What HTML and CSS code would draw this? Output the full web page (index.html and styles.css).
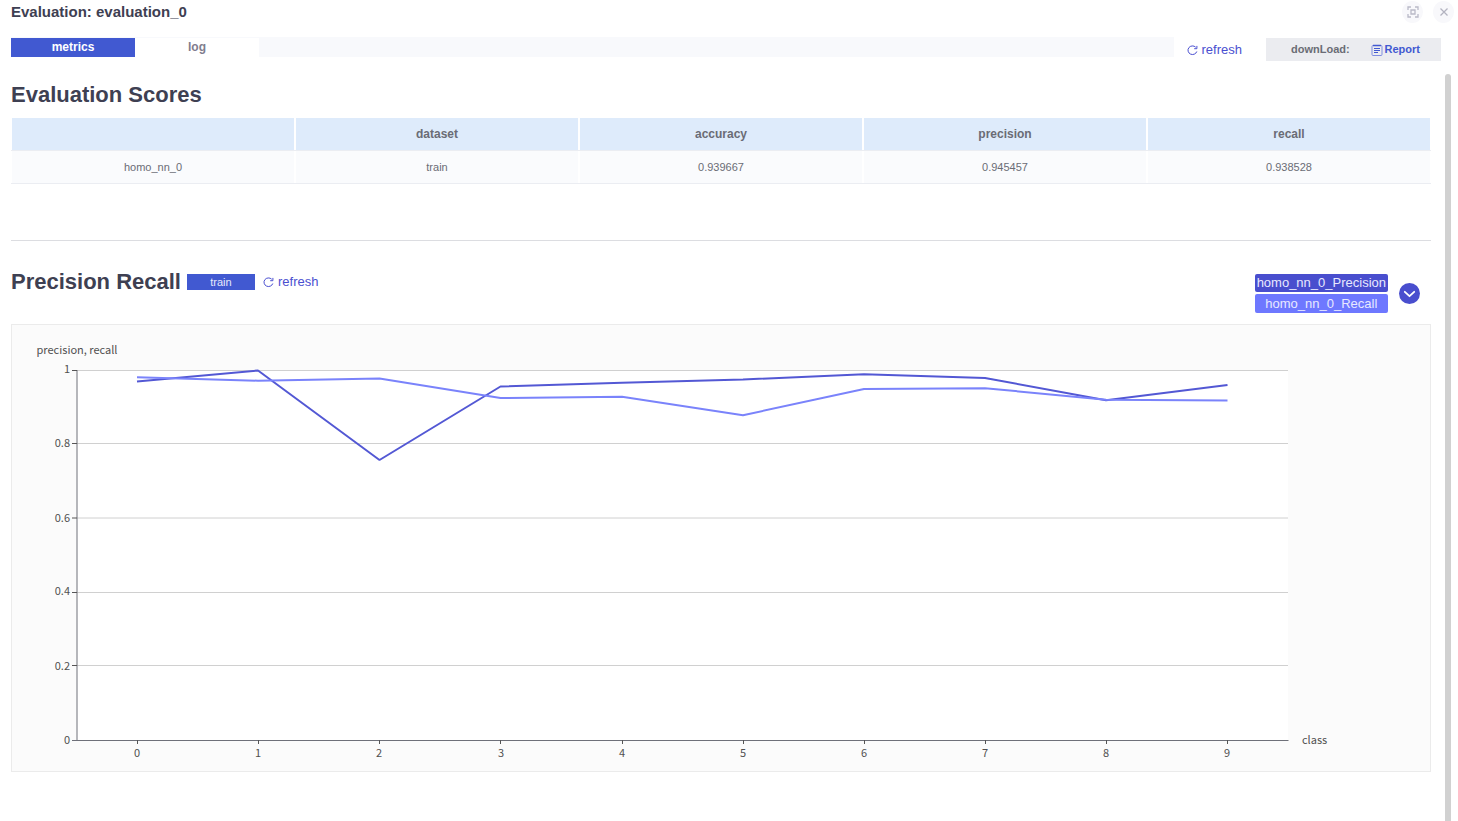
FILE: index.html
```html
<!DOCTYPE html>
<html lang="en">
<head>
<meta charset="utf-8">
<title>Evaluation: evaluation_0</title>
<link rel="stylesheet" href="styles.css">
</head>
<body>
<div class="dialog">
  <header class="dialog-header">
    <h1 class="dialog-title">Evaluation: evaluation_0</h1>
    <div class="window-actions">
      <button class="round-button" type="button" aria-label="Full screen">
        <svg width="12" height="12" viewBox="0 0 12 12" fill="none" stroke="#b9b9c7" stroke-width="1.3"><path d="M1 4V1h3M8 1h3v3M11 8v3H8M4 11H1V8M4 4h4v4H4z"/></svg>
      </button>
      <button class="round-button" type="button" aria-label="Close">
        <svg width="12" height="12" viewBox="0 0 12 12" fill="none" stroke="#b3b3c0" stroke-width="1.3"><path d="M2.500 2.500l7 7M9.500 2.500l-7 7"/></svg>
      </button>
    </div>
  </header>

  <div class="toolbar">
    <nav class="tabs" aria-label="Views">
      <button class="tab tab-active" type="button">metrics</button>
      <button class="tab" type="button">log</button>
    </nav>
    <button class="refresh" type="button">
      <svg width="11" height="11" viewBox="0 0 11 11" fill="none" stroke="#4a4fd0" stroke-width="1"><path d="M9.800 6.500A4.500 4.300 0 1 1 8.700 2.200M9.900.9v2.800H7.200"/></svg>
      refresh
    </button>
    <div class="download">
      <span>downLoad:</span>
      <a class="report" href="#">
        <svg width="12" height="12" viewBox="0 0 12 12" fill="none" stroke="#4159d1"><rect x="1" y="1.500" width="10" height="10" rx="1" stroke="#7f8de0" stroke-width="1"/><path d="M2 1.500h8" stroke-width="1.500"/><path d="M3 4.500h6M3 6.500h6M3 8.500h4" stroke-width="1"/></svg>
        Report
      </a>
    </div>
  </div>

  <div class="body">
    <main class="content">
      <section class="scores">
        <h2 class="section-title">Evaluation Scores</h2>
        <table class="score-table">
          <thead>
            <tr><th></th><th>dataset</th><th>accuracy</th><th>precision</th><th>recall</th></tr>
          </thead>
          <tbody>
            <tr><td>homo_nn_0</td><td>train</td><td>0.939667</td><td>0.945457</td><td>0.938528</td></tr>
          </tbody>
        </table>
      </section>

      <section class="curve">
        <div class="curve-header">
          <div class="curve-heading">
            <h2 class="section-title">Precision Recall</h2>
            <button class="dataset" type="button">train</button>
            <button class="refresh" type="button">
              <svg width="11" height="11" viewBox="0 0 11 11" fill="none" stroke="#4a4fd0" stroke-width="1"><path d="M9.800 6.500A4.500 4.300 0 1 1 8.700 2.200M9.900.9v2.800H7.200"/></svg>
              refresh
            </button>
          </div>
          <div class="legend">
            <div class="legend-items">
              <button class="legend-item legend-precision" type="button">homo_nn_0_Precision</button>
              <button class="legend-item legend-recall" type="button">homo_nn_0_Recall</button>
            </div>
            <button class="expand" type="button" aria-label="Expand legend">
              <svg width="13" height="13" viewBox="0 0 13 13" fill="none" stroke="#fff" stroke-width="1.800" stroke-linecap="round" stroke-linejoin="round"><path d="M1.800 4.800l4.700 4.400 4.700-4.400"/></svg>
            </button>
          </div>
        </div>

        <svg class="chart" viewBox="12 325 1418 446" role="img" aria-label="Precision and recall by class">
          <rect class="plot" x="77" y="370" width="1211" height="370"/>
          <path class="grid" d="M77 370.500H1288M77 443.500H1288M77 518H1288M77 592.500H1288M77 665.500H1288"/>
          <path class="axis" d="M77 370V740.500M72 740.500H1288.500"/>
          <path class="tick" d="M72 370.500h5M72 443.500h5M72 518h5M72 592.500h5M72 665.500h5M137.500 740v4M258.500 740v4M379.500 740v4M500.500 740v4M622.500 740v4M743.500 740v4M864.500 740v4M985.500 740v4M1106.500 740v4M1227.500 740v4"/>
          <g class="label label-y">
            <text x="70" y="373">1</text><text x="70" y="447">0.8</text><text x="70" y="522">0.6</text><text x="70" y="595">0.4</text><text x="70" y="670">0.2</text><text x="70" y="744">0</text>
          </g>
          <g class="label label-x">
            <text x="137" y="757">0</text><text x="258" y="757">1</text><text x="379" y="757">2</text><text x="501" y="757">3</text><text x="622" y="757">4</text><text x="743" y="757">5</text><text x="864" y="757">6</text><text x="985" y="757">7</text><text x="1106" y="757">8</text><text x="1227" y="757">9</text>
            <text x="77" y="354">precision, recall</text>
          </g>
          <text class="label" x="1302" y="744">class</text>
          <polyline class="line line-precision" points="137,381.500 258,370.500 379.500,460 500.500,386.500 622,382.700 743,379.500 864,374.200 985,378 1106,400.300 1227.500,385"/>
          <polyline class="line line-recall" points="137,377.300 258,380.700 379.500,378.500 500.500,398 622,396.700 743,415.200 864,389 985,388.200 1106,399.800 1227.500,400.500"/>
        </svg>
      </section>
    </main>
    <div class="scroll-track"><div class="scroll-thumb"></div></div>
  </div>
</div>
</body>
</html>
```
FILE: styles.css
```css
* {
  box-sizing: border-box;
}

body {
  margin: 0;
  background: #fff;
  color: #3e4052;
  font-family: "Liberation Sans", Arial, sans-serif;
}

button {
  margin: 0;
  padding: 0;
  border: 0;
  background: none;
  font-family: inherit;
  cursor: pointer;
}

.dialog {
  display: flex;
  flex-direction: column;
  min-height: 100vh;
}

.dialog-header {
  display: flex;
  align-items: center;
  justify-content: space-between;
  padding: 0 4px 0 11px;
}

.dialog-title {
  margin: 0;
  font-size: 15px;
  line-height: 24px;
}

.window-actions {
  display: flex;
  gap: 10px;
}

.round-button {
  display: flex;
  align-items: center;
  justify-content: center;
  width: 21px;
  height: 22px;
  border-radius: 50%;
  background: #f8f8fb;
}

.toolbar {
  display: flex;
  align-items: flex-start;
  padding: 13px 17px 12px 11px;
}

.tabs {
  display: flex;
  flex: 1;
  padding-top: 1px;
  background: #f8f9fc;
}

.tab {
  width: 124px;
  background: #fff;
  color: #7f7d8e;
  font-size: 12px;
  font-weight: bold;
  line-height: 19px;
}

.tab-active {
  background: #4159d1;
  color: #fff;
}

.refresh {
  display: flex;
  align-items: center;
  gap: 4px;
  color: #4a4fd0;
  font-size: 13px;
  line-height: 16px;
}

.toolbar .refresh {
  margin: 5px 24px 0 13px;
}

.download {
  display: flex;
  justify-content: space-between;
  width: 175px;
  margin-top: 1px;
  padding: 0 21px 0 25px;
  background: #ebecf0;
  color: #6a6c75;
  font-size: 11px;
  font-weight: bold;
  line-height: 23px;
}

.report {
  display: flex;
  align-items: center;
  gap: 2px;
  color: #4159d1;
  text-decoration: none;
}

.body {
  display: flex;
  flex: 1;
  padding-left: 11px;
}

.content {
  flex: 1;
  padding-bottom: 48px;
}

.scroll-track {
  display: flex;
  width: 27px;
  padding: 1px 7px 0 14px;
}

.scroll-thumb {
  flex: 1;
  border-radius: 3px 3px 0 0;
  background: #d1d1d1;
}

.scores {
  padding: 8px 0 56px;
  border-bottom: 1px solid #dcdde1;
}

.section-title {
  margin: 0;
  font-size: 22px;
  line-height: 28px;
}

.score-table {
  width: 100%;
  margin-top: 9px;
  border-collapse: separate;
  border-spacing: 0;
  table-layout: fixed;
  color: #6a6c75;
  text-align: center;
}

.score-table th,
.score-table td {
  height: 33px;
  padding: 0;
  border-bottom: 1px solid #ebedf2;
  background: #fafbfd;
  background-clip: padding-box;
  box-shadow: inset 1px 0 #fff, inset -1px 0 #fff;
  font-size: 11px;
}

.score-table th {
  background-color: #deebfb;
  font-size: 12px;
}

.curve-header {
  display: flex;
  align-items: flex-start;
  justify-content: space-between;
  padding: 27px 11px 11px 0;
}

.curve-heading {
  display: flex;
  align-items: center;
}

.dataset {
  width: 68px;
  margin: 0 8px 0 6px;
  background: #4159d1;
  color: #e6e9fb;
  font-size: 11px;
  line-height: 16px;
}

.legend {
  display: flex;
  align-items: center;
  gap: 11px;
  padding-top: 6px;
}

.legend-items {
  display: flex;
  flex-direction: column;
  gap: 2px;
}

.legend-item {
  padding: 0 2px;
  border-radius: 2px;
  color: #e8e9ff;
  font-size: 13px;
  line-height: 18px;
}

.legend-precision {
  background: #494ece;
}

.legend-recall {
  background: #6e78ff;
  line-height: 19px;
}

.expand {
  display: flex;
  align-items: center;
  justify-content: center;
  width: 21px;
  height: 21px;
  border-radius: 50%;
  background: #494ece;
}

.chart {
  display: block;
  width: 100%;
  border: 1px solid #ebebeb;
  background: #fbfbfb;
}

.plot {
  fill: #fff;
}

.grid,
.axis,
.tick,
.line {
  fill: none;
}

.grid {
  stroke: #d0d0d0;
}

.axis {
  stroke: #6e7079;
}

.tick {
  stroke: #555;
}

.label {
  fill: #505050;
  font-family: "Noto Sans CJK SC", sans-serif;
  font-size: 11px;
}

.label-y {
  text-anchor: end;
}

.label-x {
  text-anchor: middle;
}

.line {
  stroke-width: 2;
  stroke-linejoin: bevel;
}

.line-precision {
  stroke: #5358d4;
}

.line-recall {
  stroke: #7a83fb;
}
```
